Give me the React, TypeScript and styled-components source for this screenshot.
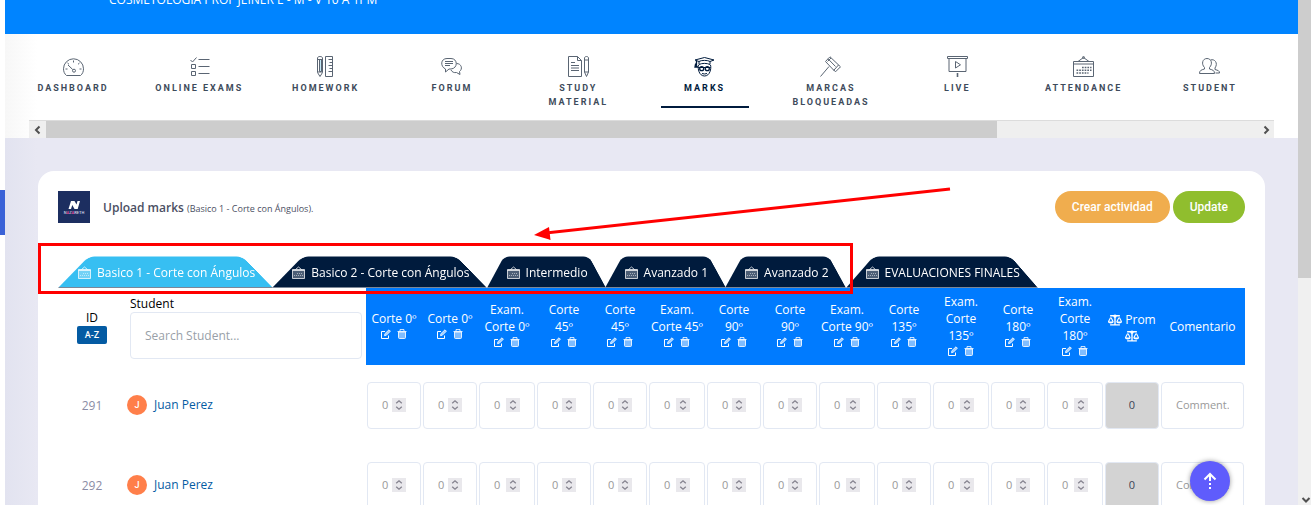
import React from "react";
import styled, { createGlobalStyle, css } from "styled-components";
import { FaBalanceScale } from "react-icons/fa";

const Global = createGlobalStyle`
  *, *::before, *::after { box-sizing: border-box; }
  body { margin: 0; background: #fff; color: #000; font-family: "Open Sans", "Noto Sans", sans-serif; font-size: 12px; }
  input, button { font-family: inherit; margin: 0; }
`;

const Window = styled.div`
  position: relative;
  display: flex;
  height: 100vh;
  overflow: hidden;
`;

const Gutter = styled.div`
  flex: none;
  width: 5px;
  padding-top: 190px;
`;

const GutterMark = styled.div`
  height: 45px;
  background: #3a62d7;
`;

const Page = styled.div`
  flex: 1;
  min-width: 0;
  background: linear-gradient(90deg, #e2e3f0, #e8e8f3 32px);
`;

const Banner = styled.header`
  height: 34px;
  padding-left: 104px;
  overflow: hidden;
  background: #0084ff;
  color: #fff;
`;

const Course = styled.div`
  margin-top: -9px;
  font-size: 12px;
  line-height: 18px;
`;

const NavArea = styled.div`
  padding: 0 24px;
  background: linear-gradient(90deg, #f7f7f7, #fff 32px);
`;

const Nav = styled.nav`
  display: flex;
  justify-content: space-between;
  height: 86px;
  padding: 22px 20px 0 0;
`;

const NavItem = styled.a<{ $active?: boolean }>`
  display: flex;
  flex-direction: column;
  align-items: center;
  width: 88px;
  height: 52px;
  color: ${(p) => (p.$active ? "#001b3d" : "#3e4b5b")};
  border-bottom: 2px solid ${(p) => (p.$active ? "#001b3d" : "transparent")};
  font: 700 9px/14px Roboto, sans-serif;
  letter-spacing: 2px;
  text-align: center;
  text-transform: uppercase;
  text-decoration: none;
  svg { flex: none; margin-bottom: 4px; opacity: ${(p) => (p.$active ? 1 : 0.85)}; }
`;

const HScroll = styled.div`
  display: flex;
  height: 18px;
  background: #efefef;
  border-top: 1px solid #dcdcdc;
`;

const ArrowBox = styled.div`
  display: flex;
  align-items: center;
  justify-content: center;
  flex: none;
  width: 17px;
  height: 17px;
`;

const HTrack = styled.div`
  flex: 1;
`;

const HThumb = styled.div`
  width: 78.5%;
  height: 17px;
  background: #cdcdcd;
`;

const VScroll = styled.div`
  display: flex;
  flex-direction: column;
  flex: none;
  width: 13px;
  background: #f0f0f0;
  overflow: hidden;
`;

const VThumb = styled.div`
  height: 55%;
  background: #cdcdcd;
`;

const VEnd = styled.div`
  margin-top: auto;
  height: 13px;
  padding-left: 3px;
`;

const Card = styled.main`
  margin: 33px 33px 0;
  padding: 20px;
  background: #fff;
  border-radius: 16px;
`;

const Heading = styled.div`
  display: flex;
  align-items: center;
  height: 32px;
`;

const Title = styled.h1`
  flex: 1;
  margin: 2px 0 0 13px;
  color: #4b4f63;
  font-size: 12px;
  font-weight: 600;
  line-height: 18px;
  small { font-size: 9px; font-weight: 400; }
`;

const Pill = styled.button<{ $color: string }>`
  height: 32px;
  margin-left: 3px;
  padding: 0 17px;
  border: 0;
  border-radius: 16px;
  background: ${(p) => p.$color};
  color: #fff;
  font: 500 12px/18px Roboto, sans-serif;
`;

const Tabs = styled.div`
  display: flex;
  margin-top: 33px;
`;

const Tab = styled.button<{ $active?: boolean }>`
  position: relative;
  z-index: 0;
  display: flex;
  align-items: center;
  gap: 6px;
  height: 32px;
  padding: 1px 17px 0 20px;
  border: 0;
  background: none;
  color: #fff;
  font-size: 12px;
  line-height: 18px;
  white-space: nowrap;
  &::before {
    content: "";
    position: absolute;
    z-index: -1;
    inset: auto -1px 0 0;
    height: 44px;
    border-radius: 8px 8px 0 0;
    border-bottom: 1px solid #7b8798;
    background: ${(p) => (p.$active ? "#37bff2" : "#001b3d")};
    transform: perspective(5px) rotateX(2.6deg);
    transform-origin: bottom;
  }
`;

const Table = styled.table`
  width: 100%;
  table-layout: fixed;
  border-collapse: collapse;
`;

const Col = styled.col<{ $w?: number }>`
  ${(p) => p.$w && css`width: ${p.$w}px;`}
`;

const Th = styled.th<{ $blue?: boolean; $left?: boolean }>`
  height: 77px;
  padding: ${(p) => (p.$left ? "0 4px" : "0")};
  background: ${(p) => (p.$blue ? "#007bff" : "transparent")};
  color: ${(p) => (p.$blue ? "#fff" : "#000")};
  font-weight: 400;
  line-height: 17px;
  text-align: ${(p) => (p.$left ? "left" : "center")};
  vertical-align: middle;
`;

const Tools = styled.div`
  display: flex;
  justify-content: center;
  gap: 6px;
  height: 17px;
  padding-top: 2px;
`;

const IconButton = styled.button`
  display: flex;
  padding: 0;
  border: 0;
  background: none;
  color: inherit;
`;

const Average = styled.div`
  display: flex;
  flex-wrap: wrap;
  align-items: center;
  justify-content: center;
  column-gap: 3px;
  line-height: 18px;
`;

const SortButton = styled.button`
  display: block;
  width: 30px;
  height: 18px;
  margin: 0 auto;
  padding: 0;
  border: 0;
  border-radius: 2px;
  background: #045ba3;
  color: #fff;
  font: 500 9px/18px Roboto, sans-serif;
`;

const Search = styled.input`
  display: block;
  width: 100%;
  height: 47px;
  padding: 0 14px;
  border: 1px solid #e2e8f3;
  border-radius: 4px;
  font-size: 12px;
  &::placeholder { color: #999fa8; }
`;

const Td = styled.td<{ $name?: boolean }>`
  height: 80px;
  padding: 0 1px;
  color: #8a8ca5;
  text-align: ${(p) => (p.$name ? "left" : "center")};
  vertical-align: middle;
`;

const Student = styled.a`
  display: flex;
  align-items: center;
  gap: 7px;
  color: #045ba3;
  line-height: 18px;
  text-decoration: none;
`;

const Avatar = styled.span`
  width: 20px;
  height: 20px;
  border-radius: 50%;
  background: #ff7f4a;
  color: #fff;
  font: 500 9px/20px Roboto, sans-serif;
  text-align: center;
`;

const Field = styled.label<{ $readonly?: boolean }>`
  display: flex;
  align-items: center;
  height: 47px;
  padding: 0 14px;
  border: 1px solid #e2e8f3;
  border-radius: 4px;
  background: ${(p) => (p.$readonly ? "#d3d3d3" : "#fff")};
`;

const Input = styled.input<{ $center?: boolean }>`
  flex: 1;
  width: 0;
  min-width: 0;
  padding: 0;
  border: 0;
  outline: 0;
  background: none;
  color: #3e4456;
  font-size: 11px;
  line-height: 18px;
  text-align: ${(p) => (p.$center ? "center" : "left")};
  appearance: textfield;
  &::placeholder { color: #999; }
  &::-webkit-inner-spin-button { display: none; }
`;

const TopButton = styled.button`
  position: fixed;
  right: 81px;
  bottom: 4px;
  display: flex;
  align-items: center;
  justify-content: center;
  width: 40px;
  height: 40px;
  padding: 0;
  border: 0;
  border-radius: 50%;
  background: #5f5cfc;
  box-shadow: 0 0 5px rgba(0, 0, 0, 0.4);
`;

const Callout = styled.svg`
  position: absolute;
  top: 180px;
  left: 38px;
  pointer-events: none;
`;

const Line = ({ size = 21, children }: { size?: number; children: React.ReactNode }) => (
  <svg width={size} height={size} viewBox="0 0 21 21" fill="none" stroke="currentColor" strokeWidth="1" aria-hidden="true">
    {children}
  </svg>
);

const Calendar = () => (
  <Line>
    <path d="M.5 5.500h20v15H.500zM.5 8h20M5 5.500l5.500-4 5.500 4" />
    <circle cx="10.500" cy="1.500" r="1" />
    <path strokeWidth="1.600" strokeDasharray="1.700 1" d="M9 11.500h9.500M3.500 14.300h15M3.500 17h12" />
  </Line>
);

const TabCalendar = () => (
  <svg width="13" height="13" viewBox="0 0 13 13" fill="none" stroke="#fff" strokeOpacity=".75" aria-hidden="true">
    <path fill="#fff" fillOpacity=".3" d="M.5 3.500h12v9H.500z" />
    <path d="M.5 4.500h12M3.500 3.500l3-2.500 3 2.500" />
    <path strokeOpacity=".5" strokeDasharray="1 1" d="M5 7.500h6M2 9.500h9" />
  </svg>
);

const navItems: { label: string; active?: boolean; icon: React.ReactNode }[] = [
  {
    label: "Dashboard",
    icon: (
      <Line>
        <path d="M3.500 19.500C1.500 18 .5 15.500.5 12.800a10 10 0 0 1 20 0c0 2.700-1 5.200-3 6.700z" />
        <path d="M10.500 4.500v2M4.500 7l1.500 1.300M16.500 7 15 8.300M2.500 13h2M16.500 13h2M5 9l4.700 4.500" />
        <circle cx="11" cy="14.700" r="1.500" />
      </Line>
    ),
  },
  {
    label: "Online Exams",
    icon: (
      <Line>
        <path d="m1.500 4 2 2 4-4.500M9.500 3.500h11M9.500 10.500h11M9.500 17.500h11M2.500 8.500h4v4h-4zM2.500 15.500h4v4h-4z" />
      </Line>
    ),
  },
  {
    label: "Homework",
    icon: (
      <Line>
        <path fill="#b9e5f5" d="M4.500 3.500h2v12h-2z" />
        <path d="M2.500 2c0-2 5-2 5 0v14.500L5 20.500l-2.500-4zM2.500 3.500h5M2.500 16h5M10.500.5h7v20h-7zM13.500 3.500h4M14.500 6.500h3M13.500 9.500h4M14.500 12.500h3M13.500 15.500h4" />
      </Line>
    ),
  },
  {
    label: "Forum",
    icon: (
      <Line>
        <path d="M4.500 13C-1 10.500-.5 2.500 6 2.500h4c7 0 7 10 0 10.500H8l-3.500 3zM4 5.500h8M4 7.500h8M4 9.500h5" />
        <path d="M15.500 7.500c5 0 6.500 5.500 3 8l.5 3-3.500-2c-2.500.5-4.500-.5-5.500-2.500" />
      </Line>
    ),
  },
  {
    label: "Study Material",
    icon: (
      <Line>
        <path d="M.5.5h9l4 4v16H.5zM9.500.5v4h4M3 6.500h4M3 9.500h8M3 12h8M3 14.500h8M16.500 2c0-2 4-2 4 0v14l-2 4.500-2-4.500zM16.500 4h4M16.500 16h4" />
      </Line>
    ),
  },
  {
    label: "Marks",
    active: true,
    icon: (
      <Line>
        <path d="m1 4 9.500-2.500L20 4l-4 1.500c-2-1.500-9-1.500-11 0z" />
        <path d="M5 5.500v3c3-1.500 8-1.500 11 0v-3" />
        <path strokeWidth="1.300" d="M2.500 5v4M1.500 8.500 1 11h2.500z" />
        <path d="M4.500 9c-1 3.500.5 11 6 11s7-7.500 6-11M4.500 11.500h12" />
        <circle strokeWidth="1.300" cx="7.700" cy="12.700" r="2" />
        <circle strokeWidth="1.300" cx="13.300" cy="12.700" r="2" />
        <path d="M8 17.500q2.500 1 5 0" />
      </Line>
    ),
  },
  {
    label: "Marcas Bloqueadas",
    icon: (
      <Line>
        <path d="m10 .8 10.500 10M10 .8 8 2.800M20.500 10.800l-5 5-2-2M5.500 5.500l2.500-2.700 7.500 7.700M5.500 5.500l9 9.500M11 2l-3.500 3.500M18.500 9l-4.500 5M9 10.500.5 20.500" />
      </Line>
    ),
  },
  {
    label: "Live",
    icon: (
      <Line>
        <path d="M.5.500h20v2H.500zM2 2.500v13h17v-13M8.500 5.500v6.500l5-3.200z" />
        <path strokeWidth="1.600" d="M10.500 17v4" />
      </Line>
    ),
  },
  { label: "Attendance", icon: <Calendar /> },
  {
    label: "Student",
    icon: (
      <Line>
        <path d="M.5 17.500c0-3 1.500-3.500 5-4.500v-1.500C2 8 3.500 2.500 8 2.500s6 5.500 2.500 9V13c3.500 1 5 1.500 5 4.500zM11.500 4c4-1.500 8 3 4.500 8v1.500c3 1 4.500 1 4.500 3.500h-4" />
      </Line>
    ),
  },
];

const tabs = [
  "Basico 1 - Corte con Ángulos",
  "Basico 2 - Corte con Ángulos",
  "Intermedio",
  "Avanzado 1",
  "Avanzado 2",
  "EVALUACIONES FINALES",
];

const activities: { lines: string[]; width: number }[] = [
  { lines: ["Corte 0º"], width: 56 },
  { lines: ["Corte 0º"], width: 56 },
  { lines: ["Exam.", "Corte 0º"], width: 58 },
  { lines: ["Corte", "45º"], width: 56 },
  { lines: ["Corte", "45º"], width: 56 },
  { lines: ["Exam.", "Corte 45º"], width: 58 },
  { lines: ["Corte", "90º"], width: 56 },
  { lines: ["Corte", "90º"], width: 56 },
  { lines: ["Exam.", "Corte 90º"], width: 58 },
  { lines: ["Corte", "135º"], width: 56 },
  { lines: ["Exam.", "Corte", "135º"], width: 58 },
  { lines: ["Corte", "180º"], width: 56 },
  { lines: ["Exam.", "Corte", "180º"], width: 58 },
];

const students = [
  { id: 291, name: "Juan Perez" },
  { id: 292, name: "Juan Perez" },
];

const Chevron = ({ d }: { d: string }) => (
  <svg width="10" height="10" viewBox="0 0 10 10" fill="none" stroke="#505050" strokeWidth="2" aria-hidden="true">
    <path d={d} />
  </svg>
);

const EditIcon = () => (
  <svg width="10" height="10" viewBox="0 0 10 10" fill="none" stroke="currentColor" aria-hidden="true">
    <path d="M4 2.500H.500v7h7V6.500" />
    <path fill="#9dcdff" strokeWidth=".8" d="m3.500 6.700.4-2L8 .8l1.400 1.400-4 4z" />
  </svg>
);

const TrashIcon = () => (
  <svg width="10" height="10" viewBox="0 0 10 10" fill="none" stroke="currentColor" strokeOpacity=".85" aria-hidden="true">
    <path fill="#80bdff" d="M1.500 3h7v5.500q0 1-1 1h-5q-1 0-1-1z" />
    <path d="M.5 2.500h9M3 2V.6h4V2" />
  </svg>
);

const Spinner = () => (
  <svg width="14" height="14" viewBox="0 0 14 14" fill="none" stroke="#85838f" strokeWidth="1.300" aria-hidden="true">
    <path fill="#e9e8ec" stroke="none" d="M0 0h14v14H0z" />
    <path d="m4.200 5.300 2.800-2.500 2.800 2.500M4.200 8.700l2.800 2.500 2.800-2.500" />
  </svg>
);

const Logo = () => (
  <svg width="32" height="32" viewBox="0 0 32 32" role="img" aria-label="Nazareth">
    <path fill="#1c2e60" d="M0 0h32v32H0z" />
    <path fill="#fff" d="m10.500 18 2.500-8h3.500l2 3.500 1-3.500H22l-2.300 8h-3.200l-2.200-4-1.300 4z" />
    <text x="16" y="23" textAnchor="middle" fill="#d9dceb" fontFamily="Roboto, sans-serif" fontSize="4" fontWeight="500">
      N<tspan fill="#f0479b">A</tspan>Z<tspan fill="#f0479b">A</tspan>RETH
    </text>
  </svg>
);

export default function App() {
  return (
    <Window>
      <Global />
      <Gutter>
        <GutterMark />
      </Gutter>
      <Page>
        <Banner>
          <Course>COSMETOLOGIA PROF JEINER E - M - V 10 A 1PM</Course>
        </Banner>
        <NavArea>
          <Nav>
            {navItems.map((n) => (
              <NavItem key={n.label} href="#" $active={n.active}>
                {n.icon}
                {n.label}
              </NavItem>
            ))}
          </Nav>
          <HScroll>
            <ArrowBox>
              <Chevron d="M6.500 1.500 3 5l3.500 3.500" />
            </ArrowBox>
            <HTrack>
              <HThumb />
            </HTrack>
            <ArrowBox>
              <Chevron d="M3.500 1.500 7 5 3.500 8.500" />
            </ArrowBox>
          </HScroll>
        </NavArea>
        <Card>
          <Heading>
            <Logo />
            <Title>
              Upload marks <small>(Basico 1 - Corte con Ángulos).</small>
            </Title>
            <Pill $color="#f0ad4e">Crear actividad</Pill>
            <Pill $color="#90be2e">Update</Pill>
          </Heading>
          <Tabs>
            {tabs.map((t, i) => (
              <Tab key={t} $active={i === 0}>
                <TabCalendar />
                {t}
              </Tab>
            ))}
          </Tabs>
          <Table>
            <colgroup>
              <Col $w={68} />
              <Col />
              {activities.map((a, i) => (
                <Col key={i} $w={a.width} />
              ))}
              <Col $w={56} />
              <Col $w={85} />
            </colgroup>
            <thead>
              <tr>
                <Th>
                  ID
                  <SortButton>A-Z</SortButton>
                </Th>
                <Th $left>
                  <label htmlFor="search">Student</label>
                  <Search id="search" placeholder="Search Student..." />
                </Th>
                {activities.map((a, i) => (
                  <Th key={i} $blue>
                    {a.lines.map((l) => (
                      <div key={l}>{l}</div>
                    ))}
                    <Tools>
                      <IconButton aria-label="Edit">
                        <EditIcon />
                      </IconButton>
                      <IconButton aria-label="Delete">
                        <TrashIcon />
                      </IconButton>
                    </Tools>
                  </Th>
                ))}
                <Th $blue>
                  <Average>
                    <FaBalanceScale size={14} />
                    <span>Prom</span>
                    <FaBalanceScale size={14} />
                  </Average>
                </Th>
                <Th $blue>Comentario</Th>
              </tr>
            </thead>
            <tbody>
              {students.map((s) => (
                <tr key={s.id}>
                  <Td>{s.id}</Td>
                  <Td $name>
                    <Student href="#">
                      <Avatar>J</Avatar>
                      {s.name}
                    </Student>
                  </Td>
                  {activities.map((a, i) => (
                    <Td key={i}>
                      <Field>
                        <Input type="number" placeholder="0" aria-label={a.lines.join(" ")} />
                        <Spinner />
                      </Field>
                    </Td>
                  ))}
                  <Td>
                    <Field $readonly>
                      <Input $center readOnly value="0" aria-label="Prom" />
                    </Field>
                  </Td>
                  <Td>
                    <Field>
                      <Input placeholder="Comment..." aria-label="Comentario" />
                    </Field>
                  </Td>
                </tr>
              ))}
            </tbody>
          </Table>
        </Card>
      </Page>
      <VScroll>
        <VThumb />
        <VEnd>
          <Chevron d="M1.500 3 5 6.500 8.500 3" />
        </VEnd>
      </VScroll>
      <Callout width="920" height="120" viewBox="0 0 920 120" fill="none" stroke="#f00" strokeWidth="3" aria-hidden="true">
        <path d="M1.500 64.500h812v48H1.500z" />
        <path d="M912 9 508 53" />
        <path fill="#f00" stroke="none" d="m496 55 15-8 1.500 13z" />
      </Callout>
      <TopButton aria-label="Back to top">
        <svg width="14" height="18" viewBox="0 0 14 18" fill="none" stroke="#fff" strokeWidth="2" aria-hidden="true">
          <path d="M1.500 7.500 7 2l5.500 5.500M7 2.500V9M7 11v2M7 15v2" />
        </svg>
      </TopButton>
    </Window>
  );
}
